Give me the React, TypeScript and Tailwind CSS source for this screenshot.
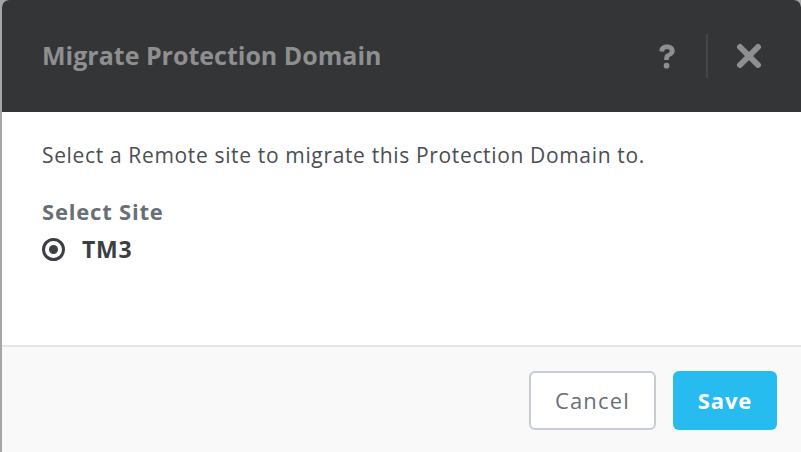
import React from "react";

export default function App() {
  return (
    <div className="w-[801px] h-[452px] bg-[#a3a7aa] pl-[2px] overflow-hidden" style={{ fontFamily: "'Open Sans', Lato, sans-serif" }}>
      <div className="h-full flex flex-col bg-white rounded-t-[7px] overflow-hidden">
        <div className="h-[112px] shrink-0 bg-[#343537] flex items-center pl-[40px] pr-[32px]">
          <h1 className="flex-1 text-[25px] font-bold text-[#8e8f90]">Migrate Protection Domain</h1>
          <button className="w-[30px] h-[40px] flex items-center justify-center text-[#8e8f90]">
            <svg width="20" height="27" viewBox="0 0 20 28">
              <path d="M2 8.5C2 4.2 5.5 1.5 10 1.5C14.8 1.5 18 4.3 18 8.2C18 11.6 15.4 12.8 13.4 14C12.2 14.7 11.9 15.3 11.9 16.6V17.6H7.1V16C7.1 13.4 8.2 12.1 10.2 11C11.9 10.1 12.9 9.6 12.9 8.4C12.9 7 11.7 6.1 10 6.1C8.2 6.1 7 7.2 7 9Z" fill="currentColor" />
              <circle cx="9.5" cy="23.5" r="3" fill="currentColor" />
            </svg>
          </button>
          <div className="w-[2px] h-[44px] bg-[#454647] ml-[24px] mr-[21px]" />
          <button className="w-[40px] h-[40px] flex items-center justify-center text-[#8e8f90]">
            <svg width="28" height="26" viewBox="0 0 28 26">
              <path d="M5 4L23 22M23 4L5 22" stroke="currentColor" strokeWidth="6" strokeLinecap="round" />
            </svg>
          </button>
        </div>

        <div className="flex-1 px-[40px] pt-[29px]">
          <p className="text-[21px] leading-[28px] text-[#4a4e53] tracking-[0.65px]">Select a Remote site to migrate this Protection Domain to.</p>
          <div className="mt-[27px] text-[22px] leading-[30px] font-bold text-[#6a6f75] tracking-[0.8px]">Select Site</div>
          <label className="mt-[8px] flex items-center gap-[17px]">
            <span className="w-[23px] h-[23px] rounded-full border-[3px] border-[#3b3e42] flex items-center justify-center">
              <span className="w-[9px] h-[9px] rounded-full bg-[#3b3e42]" />
            </span>
            <span className="text-[23px] leading-[30px] font-bold text-[#3b3e42] tracking-[0.8px]">TM3</span>
          </label>
        </div>

        <div className="h-[107px] shrink-0 bg-[#f9f9f9] border-t-2 border-[#e6e6e6] flex items-center justify-end gap-[17px] pr-[24px] pt-[2px]">
          <button className="w-[127px] h-[59px] rounded-[6px] border-2 border-[#c6ccd1] bg-white text-[22px] text-[#6a6f75] tracking-[1.2px]">Cancel</button>
          <button className="w-[104px] h-[59px] rounded-[6px] bg-[#27bcef] text-[22px] font-bold text-white tracking-[0.9px]">Save</button>
        </div>
      </div>
    </div>
  );
}
